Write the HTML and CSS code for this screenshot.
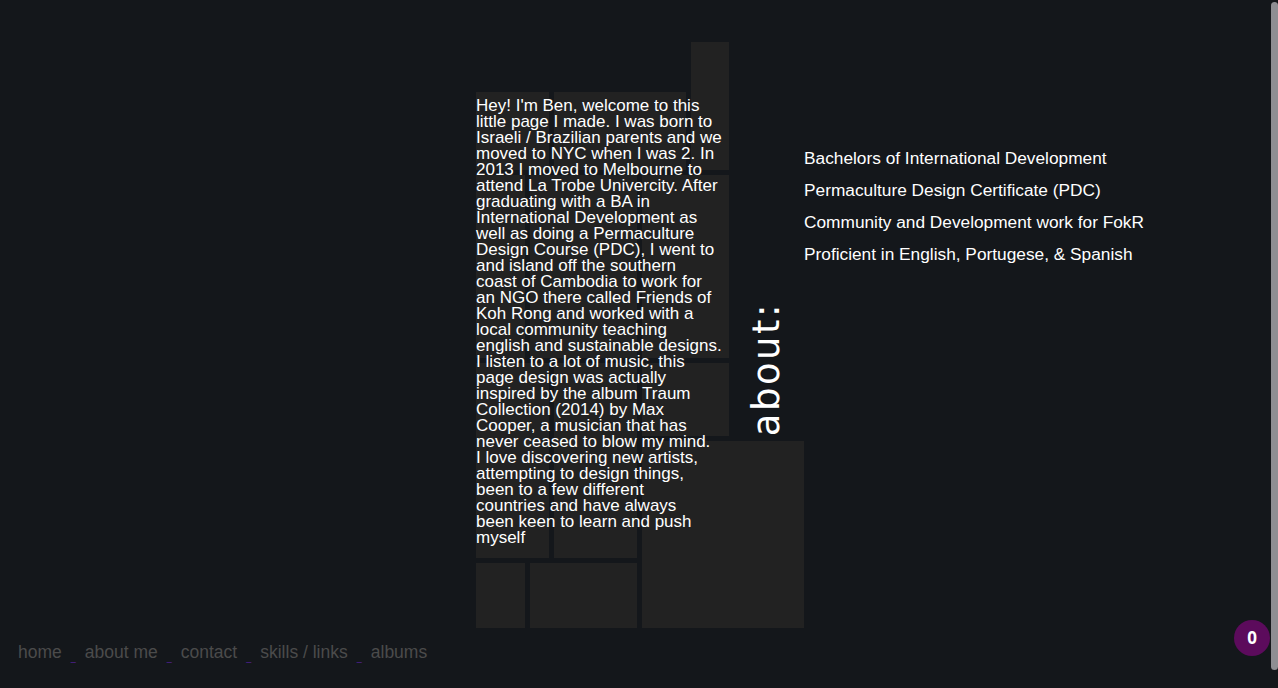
FILE: index.html
```html
<!DOCTYPE html>
<html lang="en">
<head>
<meta charset="utf-8">
<title>about me</title>
<link rel="stylesheet" href="styles.css">
</head>
<body>
<div class="page">
  <main class="stage">
    <section class="mosaic">
      <div class="tile t-top"></div>
      <div class="tile t-a"></div>
      <div class="tile t-b"></div>
      <div class="tile t-c"></div>
      <div class="tile t-d"></div>
      <div class="tile t-e"></div>
      <div class="tile t-f"></div>
      <div class="tile t-g"></div>
      <div class="tile t-h"></div>
      <div class="tile t-big"></div>
      <div class="tile t-i"></div>
      <div class="tile t-j"></div>
      <p class="bio">Hey! I'm Ben, welcome to this<br>little page I made. I was born to<br>Israeli / Brazilian parents and we<br>moved to NYC when I was 2. In<br>2013 I moved to Melbourne to<br>attend La Trobe Univercity. After<br>graduating with a BA in<br>International Development as<br>well as doing a Permaculture<br>Design Course (PDC), I went to<br>and island off the southern<br>coast of Cambodia to work for<br>an NGO there called Friends of<br>Koh Rong and worked with a<br>local community teaching<br>english and sustainable designs.<br>I listen to a lot of music, this<br>page design was actually<br>inspired by the album Traum<br>Collection (2014) by Max<br>Cooper, a musician that has<br>never ceased to blow my mind.<br>I love discovering new artists,<br>attempting to design things,<br>been to a few different<br>countries and have always<br>been keen to learn and push<br>myself</p>
      <h1 class="heading">about:</h1>
    </section>
    <ul class="facts">
      <li>Bachelors of International Development</li>
      <li>Permaculture Design Certificate (PDC)</li>
      <li>Community and Development work for FokR</li>
      <li>Proficient in English, Portugese, &amp; Spanish</li>
    </ul>
  </main>
  <nav class="nav">
    <a href="#">home</a><span class="sep">_</span>
    <a href="#">about me</a><span class="sep">_</span>
    <a href="#">contact</a><span class="sep">_</span>
    <a href="#">skills / links</a><span class="sep">_</span>
    <a href="#">albums</a>
  </nav>
</div>
<div class="badge">0</div>
<div class="scrollthumb"></div>
</body>
</html>
```
FILE: styles.css
```css
html, body {
  margin: 0;
  padding: 0;
  height: 688px;
  overflow: hidden;
  background: #14171b;
}
body {
  font-family: "Liberation Sans", Arial, sans-serif;
  color: #ffffff;
}
.page {
  height: 688px;
}
.stage {
  display: flex;
  align-items: flex-start;
  padding-left: 476px;
  height: 628px;
}
.mosaic {
  display: grid;
  grid-template-columns: 49px 19px 83px 44px 38px 70px;
  grid-template-rows: 45px 78px 183px 73px 117px 65px;
  gap: 5px;
  width: 328px;
  margin-top: 42px;
}
.tile { background: #222222; }
.t-top { grid-column: 5; grid-row: 1 / 3; }
.t-a { grid-column: 1 / 3; grid-row: 2; }
.t-b { grid-column: 3 / 5; grid-row: 2; }
.t-c { grid-column: 1; grid-row: 3; }
.t-d { grid-column: 2 / 4; grid-row: 3; }
.t-e { grid-column: 4 / 6; grid-row: 3; }
.t-f { grid-column: 1 / 3; grid-row: 4 / 6; }
.t-g { grid-column: 3; grid-row: 4 / 6; }
.t-h { grid-column: 4 / 6; grid-row: 4; }
.t-big { grid-column: 4 / 7; grid-row: 5 / 7; }
.t-i { grid-column: 1; grid-row: 6; }
.t-j { grid-column: 2 / 4; grid-row: 6; }

.bio {
  grid-column: 1 / 6;
  grid-row: 2 / 7;
  z-index: 1;
  margin: 6px 0 0 0;
  font-size: 17px;
  line-height: 16px;
  white-space: nowrap;
  color: #ffffff;
}
.heading {
  grid-column: 6;
  grid-row: 3 / 5;
  align-self: end;
  justify-self: start;
  margin: 0 0 0 14px;
  font-family: "DejaVu Sans", sans-serif;
  font-weight: normal;
  font-size: 37px;
  line-height: 37px;
  letter-spacing: 2.5px;
  writing-mode: vertical-rl;
  transform: rotate(180deg);
  color: #ffffff;
}
.facts {
  list-style: none;
  margin: 142px 0 0 0;
  padding: 0;
  font-size: 17.3px;
  line-height: 32px;
  white-space: nowrap;
}
.nav {
  display: flex;
  align-items: baseline;
  gap: 9px;
  padding-left: 18px;
  margin-top: 14px;
  font-size: 17.5px;
  line-height: 20px;
}
.nav a {
  color: #4b4b4b;
  text-decoration: none;
}
.sep {
  color: #5a22a8;
  font-size: 9px;
  position: relative;
  top: 3px;
}
.badge {
  position: fixed;
  left: 1234px;
  top: 620px;
  width: 36px;
  height: 36px;
  border-radius: 50%;
  background: #5c0b5c;
  color: #ffffff;
  font-family: "Open Sans", sans-serif;
  font-weight: 700;
  font-size: 17px;
  line-height: 36px;
  text-align: center;
}
.scrollthumb {
  position: fixed;
  right: 0;
  top: 2px;
  width: 7px;
  height: 668px;
  border-radius: 4px;
  background: #8e8e93;
}
```
